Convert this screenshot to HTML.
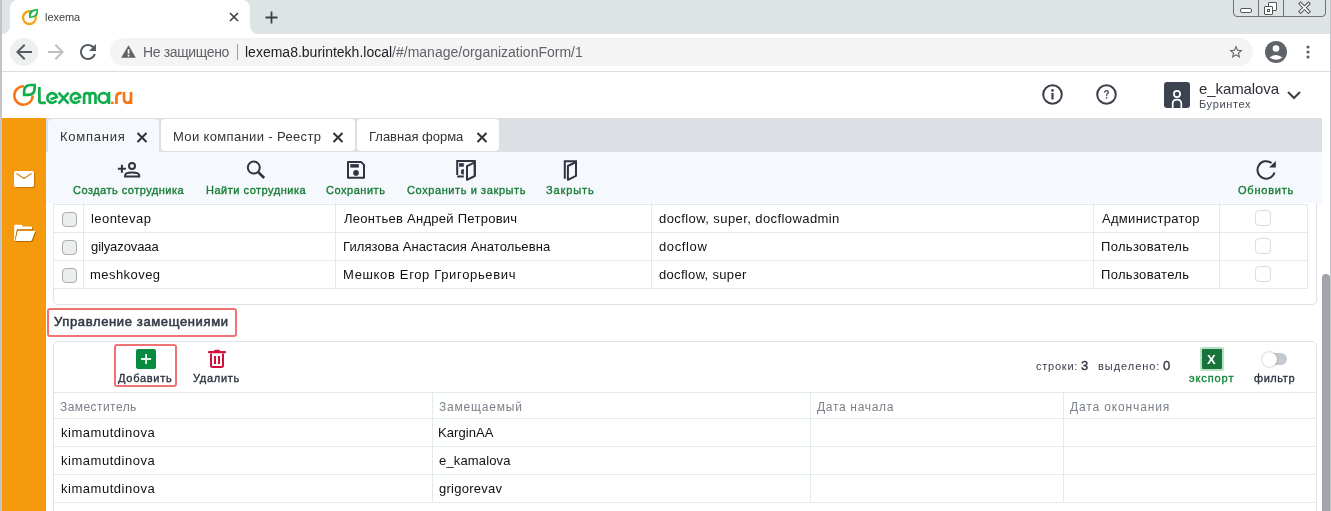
<!DOCTYPE html>
<html><head><meta charset="utf-8">
<style>
*{margin:0;padding:0;box-sizing:border-box}
html,body{width:1331px;height:511px;overflow:hidden;background:#fff;font-family:"Liberation Sans",sans-serif;position:relative}
.a{position:absolute}
.t{position:absolute;white-space:nowrap;line-height:1;will-change:transform}
svg{position:absolute;overflow:visible}
.tb{color:#187c36;font-size:11px;-webkit-text-stroke:0.35px currentColor}
.sb{-webkit-text-stroke:0.35px currentColor}
.sb2{-webkit-text-stroke:0.55px currentColor}
.cell{font-size:13px;color:#111}
.hd{font-size:12px;color:#7a8089}
</style></head><body>
<!-- ============ CHROME ============ -->
<div class="a" style="left:0;top:0;width:1331px;height:34px;background:#dee3e6"></div>
<div class="a" style="left:2px;top:26px;width:256px;height:8px;background:#fff"></div>
<div class="a" style="left:2px;top:0;width:8px;height:34px;background:#dee3e6;border-bottom-right-radius:8px"></div>
<div class="a" style="left:250px;top:0;width:8px;height:34px;background:#dee3e6;border-bottom-left-radius:8px"></div>
<div class="a" style="left:10px;top:0;width:240px;height:34px;background:#fff;border-radius:8px 8px 0 0"></div>
<!-- favicon -->
<svg style="left:20px;top:8px" width="20" height="20" viewBox="0 0 20 20">
 <circle cx="9.4" cy="9.6" r="6.4" fill="none" stroke="#f7a21b" stroke-width="2.3"/>
 <path d="M9 10 L9 5 Q10 1 18 1 L18 5 Q17 10 9 10 Z" fill="#16b94a"/>
 <path d="M10.6 8.6 Q11 3.6 16.6 2.6 Q16.2 8 10.6 8.6Z" fill="#fff"/>
</svg>
<div class="t" style="left:44.50px;top:12px;font-size:11px;color:#3c4043;letter-spacing:-0.060px">lexema</div>
<svg style="left:229px;top:12px" width="10" height="10" viewBox="0 0 10 10"><path d="M1 1L9 9M9 1L1 9" stroke="#3c4043" stroke-width="1.6"/></svg>
<svg style="left:265px;top:11px" width="13" height="13" viewBox="0 0 13 13"><path d="M6.5 0.5V12.5M0.5 6.5H12.5" stroke="#3c4043" stroke-width="1.8"/></svg>
<!-- window controls -->
<div class="a" style="left:1233px;top:-3px;width:93px;height:20px;border:1px solid #707070;border-radius:0 0 4px 4px"></div>
<div class="a" style="left:1258px;top:0;width:1px;height:16px;background:#707070"></div>
<div class="a" style="left:1283px;top:0;width:1px;height:16px;background:#707070"></div>
<div class="a" style="left:1240px;top:8px;width:12px;height:5px;background:#fff;border:1px solid #555;border-radius:2px"></div>
<div class="a" style="left:1268px;top:2px;width:9px;height:9px;background:#fff;border:1px solid #555;border-radius:1px"></div>
<div class="a" style="left:1264px;top:6px;width:9px;height:9px;background:#fff;border:1px solid #555;border-radius:1px"></div>
<div class="a" style="left:1267px;top:9px;width:3px;height:3px;border:1px solid #555"></div>
<svg style="left:1298px;top:1px" width="13" height="12" viewBox="0 0 13 12"><path d="M2.6 2.8L10.4 10.6M10.4 2.8L2.6 10.6" stroke="#555" stroke-width="3.6" stroke-linecap="square"/><path d="M2.6 2.8L10.4 10.6M10.4 2.8L2.6 10.6" stroke="#fff" stroke-width="1.6" stroke-linecap="square"/></svg>
<!-- toolbar -->
<div class="a" style="left:0;top:34px;width:1331px;height:37px;background:#fff"></div>
<div class="a" style="left:0;top:71px;width:1331px;height:1px;background:#dadce0"></div>
<div class="a" style="left:10px;top:38px;width:28px;height:28px;background:#eef0ef;border-radius:14px"></div>
<svg style="left:16px;top:44px" width="16" height="16" viewBox="4 4 16 16"><path d="M20 11H7.83l5.59-5.59L12 4l-8 8 8 8 1.41-1.41L7.83 13H20v-2z" fill="#545b61"/></svg>
<svg style="left:48px;top:44px" width="16" height="16" viewBox="4 4 16 16"><path d="M12 4l-1.41 1.41L16.17 11H4v2h12.17l-5.58 5.59L12 20l8-8z" fill="#bcc1bd"/></svg>
<svg style="left:80px;top:44px" width="16" height="16" viewBox="4 4 16 16"><path d="M17.65 6.35C16.2 4.9 14.21 4 12 4c-4.42 0-7.99 3.58-7.99 8s3.57 8 7.99 8c3.73 0 6.84-2.55 7.73-6h-2.08c-.82 2.33-3.04 4-5.65 4-3.31 0-6-2.69-6-6s2.69-6 6-6c1.66 0 3.14.69 4.22 1.78L13 11h7V4l-2.35 2.35z" fill="#545b61"/></svg>
<div class="a" style="left:110px;top:38px;width:1143px;height:28px;background:#f4f4f4;border-radius:14px"></div>
<svg style="left:121px;top:45px" width="15" height="13" viewBox="0 0 15 13"><path d="M7.5 0.3L14.8 12.8H0.2Z" fill="#5f6368"/><rect x="6.7" y="4.3" width="1.7" height="4.5" fill="#fff"/><rect x="6.7" y="9.8" width="1.7" height="1.7" fill="#fff"/></svg>
<div class="t" style="left:142.60px;top:45px;font-size:14px;color:#5f6368;letter-spacing:-0.360px">Не защищено</div>
<div class="a" style="left:237px;top:44px;width:1px;height:16px;background:#9aa0a6"></div>
<div class="t" style="left:245.00px;top:45px;font-size:14px;color:#202124">lexema8.burintekh.local<span style="color:#5f6368">/#/manage/organizationForm/1</span></div>
<svg style="left:1228px;top:44px" width="16" height="16" viewBox="0 0 24 24"><path d="M22 9.24l-7.19-.62L12 2 9.19 8.63 2 9.24l5.46 4.73L5.82 21 12 17.27 18.18 21l-1.63-7.03L22 9.24zM12 15.4l-3.76 2.27 1-4.28-3.32-2.88 4.38-.38L12 6.1l1.71 4.04 4.38.38-3.32 2.88 1 4.28L12 15.4z" fill="#5f6368"/></svg>
<svg style="left:1265px;top:41px" width="22" height="22" viewBox="0 0 22 22"><circle cx="11" cy="11" r="11" fill="#5f6368"/><circle cx="11" cy="7.5" r="3.3" fill="#fff"/><path d="M4.5 16.5Q11 11.5 17.5 16.5Q11 21 4.5 16.5Z" fill="#fff"/></svg>
<svg style="left:1305px;top:44px" width="6" height="16" viewBox="0 0 6 16"><circle cx="3" cy="3" r="1.6" fill="#5f6368"/><circle cx="3" cy="8" r="1.6" fill="#5f6368"/><circle cx="3" cy="13" r="1.6" fill="#5f6368"/></svg>

<!-- ============ APP HEADER ============ -->
<div class="a" style="left:0;top:72px;width:1331px;height:46px;background:#fff"></div>
<!-- logo -->
<svg style="left:0;top:72px" width="140" height="46" viewBox="0 72 140 46">
 <g fill="none" stroke-width="2.5">
 <path d="M23.98 86.31 A9.2 9.2 0 1 0 32.7 95.5" stroke="#fa7612"/>
 <path d="M24.1 94.9 V91.5 Q24.1 85 31 85 H34.6 V88.5 Q34.6 94.9 28 94.9 Z" stroke="#10ad4b" stroke-width="2.7"/>
 <g stroke="#10ad4b" stroke-width="2.7">
 <path d="M39.4 87 V101 Q39.4 102.8 41.2 102.8 H45.8"/>
 <path d="M56.3 100.4 A4.8 4.8 0 1 1 56.88 97.17 L50.5 99.2"/>
 <path d="M58.6 92.6 L68.6 103.6 M68.6 92.6 L58.6 103.6"/>
 <path d="M79.7 100.4 A4.8 4.8 0 1 1 80.28 97.17 L73.9 99.2"/>
 <path d="M84.1 104 V96 Q84.1 93.2 86.95 93.2 Q89.8 93.2 89.8 96 V104 M89.8 96 Q89.8 93.2 92.65 93.2 Q95.5 93.2 95.5 96 V104"/>
 <circle cx="103.4" cy="98" r="4.8"/>
 <path d="M109 92 V104"/>
 </g>
 <g stroke="#fa7612" stroke-width="2.7">
 <path d="M116.4 104 V97.5 Q116.4 93.2 120.5 93.2 H121.8"/>
 <path d="M124 92 V99 Q124 102.8 127.5 102.8 Q131 102.8 131 99 V92 M131 99 V104"/>
 </g>
 </g>
 <rect x="111.1" y="101.6" width="2.6" height="2.5" fill="#fa7612"/>
</svg>
<!-- header icons -->
<svg style="left:1042px;top:84px" width="21" height="21" viewBox="0 0 21 21"><circle cx="10.5" cy="10.5" r="9.3" fill="none" stroke="#3a3f4a" stroke-width="2"/><rect x="9.4" y="9" width="2.2" height="6.5" fill="#3a3f4a"/><circle cx="10.5" cy="6.4" r="1.3" fill="#3a3f4a"/></svg>
<svg style="left:1096px;top:84px" width="21" height="21" viewBox="0 0 21 21"><circle cx="10.5" cy="10.5" r="9.3" fill="none" stroke="#3a3f4a" stroke-width="2"/><path d="M8.7 8.6Q8.7 6.7 10.5 6.7Q12.3 6.7 12.3 8.3Q12.3 9.4 11.2 10Q10.5 10.4 10.5 11.8" fill="none" stroke="#3a3f4a" stroke-width="1.3"/><circle cx="10.5" cy="13.9" r="0.8" fill="#3a3f4a"/></svg>
<div class="a" style="left:1164px;top:82px;width:26px;height:26px;background:#3d4250;border-radius:3px"></div>
<svg style="left:1164px;top:82px" width="26" height="26" viewBox="0 0 26 26"><circle cx="13" cy="12" r="3.1" fill="none" stroke="#fff" stroke-width="1.7"/><path d="M8.7 26V21.6Q8.7 17.6 13 17.6Q17.3 17.6 17.3 21.6V26" fill="none" stroke="#fff" stroke-width="1.7"/></svg>
<div class="t" style="left:1199.00px;top:81px;font-size:15px;color:#2b2f38;letter-spacing:-0.089px">e_kamalova</div>
<div class="t" style="left:1199.00px;top:99px;font-size:11px;color:#444a55;letter-spacing:0.643px">Буринтех</div>
<svg style="left:1287px;top:91px" width="14" height="8" viewBox="0 0 14 8"><path d="M1 1L7 7L13 1" fill="none" stroke="#3a3f4a" stroke-width="2"/></svg>

<!-- ============ SIDEBAR ============ -->
<div class="a" style="left:0;top:118px;width:46px;height:393px;background:#f59a0c"></div>
<div class="a" style="left:14px;top:171px;width:20px;height:16px;background:#fff;border-radius:2px;box-shadow:1px 1px 1px rgba(120,60,0,.4)"></div>
<svg style="left:14px;top:171px" width="20" height="16" viewBox="0 0 20 16"><path d="M2.5 2.5L10 7.5L17.5 2.5" fill="none" stroke="#d98a10" stroke-width="1.3"/></svg>
<svg style="left:0;top:210px;filter:drop-shadow(1px 1px 0.6px rgba(110,55,0,.5))" width="46" height="40" viewBox="0 210 46 40"><path d="M14.2 226 Q14.2 224.8 15.4 224.8 H21.6 L23.2 226.6 H30.8 Q32 226.6 32 227.8 V229.3 H16.9 L15.2 237.8 V240.9 H15.4 Q14.2 240.9 14.2 239.7 Z" fill="#fff"/><path d="M17.7 230.9 H35.3 L31.9 239.9 Q31.5 240.9 30.5 240.9 H15.4 Z" fill="#fff"/></svg>

<!-- ============ APP TABS ============ -->
<div class="a" style="left:46px;top:118px;width:1276px;height:34px;background:#dcdfe4"></div>
<div class="a" style="left:48px;top:119px;width:111px;height:33px;background:#f5f8fc;border-radius:4px 4px 0 0"></div>
<div class="a" style="left:161px;top:119px;width:194px;height:32px;background:#fff;border-radius:4px"></div>
<div class="a" style="left:357px;top:119px;width:142px;height:32px;background:#fff;border-radius:4px"></div>
<div class="t" style="left:60.40px;top:130px;font-size:13px;color:#333;letter-spacing:0.743px">Компания</div>
<div class="t" style="left:173.30px;top:130px;font-size:13px;color:#333;letter-spacing:0.355px">Мои компании - Реестр</div>
<div class="t" style="left:369.40px;top:130px;font-size:13px;color:#333;letter-spacing:-0.008px">Главная форма</div>
<svg style="left:136px;top:131.5px" width="12" height="11" viewBox="0 0 12 11"><path d="M1.5 1L10.5 10M10.5 1L1.5 10" stroke="#30343c" stroke-width="2.1"/></svg>
<svg style="left:332px;top:131.5px" width="12" height="11" viewBox="0 0 12 11"><path d="M1.5 1L10.5 10M10.5 1L1.5 10" stroke="#30343c" stroke-width="2.1"/></svg>
<svg style="left:476px;top:131.5px" width="12" height="11" viewBox="0 0 12 11"><path d="M1.5 1L10.5 10M10.5 1L1.5 10" stroke="#30343c" stroke-width="2.1"/></svg>

<!-- ============ APP TOOLBAR ============ -->
<div class="a" style="left:46px;top:152px;width:1276px;height:51px;background:#f5f8fc"></div>
<div class="t tb" style="left:72.70px;top:185px;letter-spacing:0.488px">Создать сотрудника</div>
<div class="t tb" style="left:205.50px;top:185px;letter-spacing:0.513px">Найти сотрудника</div>
<div class="t tb" style="left:326.30px;top:185px;letter-spacing:0.525px">Сохранить</div>
<div class="t tb" style="left:406.50px;top:185px;letter-spacing:0.600px">Сохранить и закрыть</div>
<div class="t tb" style="left:545.90px;top:185px;letter-spacing:0.883px">Закрыть</div>
<div class="t tb" style="left:1237.50px;top:185px;letter-spacing:0.786px">Обновить</div>

<svg style="left:0;top:0" width="1331" height="511" viewBox="0 0 1331 511">
 <g fill="none" stroke="#2f3440" stroke-width="2">
  <path d="M117.9 168.8H125.9M121.9 164.8V172.8"/>
  <circle cx="132" cy="165.9" r="3"/>
  <path d="M125.1 176.6V175.5Q125.1 172.6 132.15 172.6Q139.2 172.6 139.2 175.5V176.6Z"/>
  <circle cx="253.8" cy="167.6" r="6"/>
  <path d="M258.3 172.1L264.2 178" stroke-width="2.6"/>
  <path d="M348 161.9H361L364 164.9V177.8H348Z" stroke-linejoin="round"/>
  <path d="M457.2 175V161H474.8V175.5M457.2 176.6H463.8"/>
  <path d="M467 166.2L474.8 162.3V176L467 179.8Z" stroke-linejoin="round"/>
  <path d="M564.8 178.8V161.3H576V175.5"/>
  <path d="M567.9 166L576 162V175.8L567.9 179.8Z" stroke-linejoin="round"/>
  <path d="M1274.5 172.5A8.7 8.7 0 1 1 1271.5 163"/>
 </g>
 <g fill="#2f3440">
  <rect x="350.3" y="164.1" width="8.5" height="3.5"/>
  <circle cx="356" cy="172.9" r="2.8"/>
  <rect x="459.1" y="163.2" width="4.7" height="3.5"/>
  <path d="M463.8 169.1V174.7A2.9 2.8 0 0 1 463.8 169.1Z"/>
  <path d="M1269 167.6L1275.8 160.9V167.6Z"/>
 </g>
</svg>
<!-- ============ CONTENT ============ -->
<div class="a" style="left:46px;top:203px;width:1276px;height:308px;background:#fff"></div>

<!-- card 1 -->
<div class="a" style="left:53px;top:203px;width:1264px;height:102px;border:1px solid #dfe3e8;border-top:none;border-radius:0 0 5px 5px"></div>
<div class="a" style="left:53px;top:204px;width:1255px;height:85px;border:1px solid #e3ebea;border-top:1px solid #e3ebea"></div>
<div class="a" style="left:53px;top:232px;width:1255px;height:1px;background:#e3ebea"></div>
<div class="a" style="left:53px;top:260px;width:1255px;height:1px;background:#e3ebea"></div>
<div class="a" style="left:83px;top:203px;width:1px;height:86px;background:#e3ebea"></div>
<div class="a" style="left:335px;top:203px;width:1px;height:86px;background:#e3ebea"></div>
<div class="a" style="left:651px;top:203px;width:1px;height:86px;background:#e3ebea"></div>
<div class="a" style="left:1093px;top:203px;width:1px;height:86px;background:#e3ebea"></div>
<div class="a" style="left:1219px;top:203px;width:1px;height:86px;background:#e3ebea"></div>
<div class="a" style="left:62px;top:212px;width:15px;height:15px;border:1px solid #a9adaa;background:#eceeec;border-radius:4px"></div>
<div class="a" style="left:1255px;top:210px;width:16px;height:16px;border:1px solid #d6dde3;background:#fff;border-radius:4px"></div>
<div class="t cell" style="left:90.70px;top:212px;letter-spacing:0.437px">leontevap</div>
<div class="t cell" style="left:343.60px;top:212px;letter-spacing:0.270px">Леонтьев Андрей Петрович</div>
<div class="t cell" style="left:659.20px;top:212px;letter-spacing:0.415px">docflow, super, docflowadmin</div>
<div class="t cell" style="left:1101.50px;top:212px;letter-spacing:0.308px">Администратор</div>
<div class="a" style="left:62px;top:240px;width:15px;height:15px;border:1px solid #a9adaa;background:#eceeec;border-radius:4px"></div>
<div class="a" style="left:1255px;top:238px;width:16px;height:16px;border:1px solid #d6dde3;background:#fff;border-radius:4px"></div>
<div class="t cell" style="left:91.30px;top:240px;letter-spacing:-0.100px">gilyazovaaa</div>
<div class="t cell" style="left:342.60px;top:240px;letter-spacing:0.097px">Гилязова Анастасия Анатольевна</div>
<div class="t cell" style="left:659.20px;top:240px;letter-spacing:0.617px">docflow</div>
<div class="t cell" style="left:1100.50px;top:240px;letter-spacing:0.327px">Пользователь</div>
<div class="a" style="left:62px;top:268px;width:15px;height:15px;border:1px solid #a9adaa;background:#eceeec;border-radius:4px"></div>
<div class="a" style="left:1255px;top:266px;width:16px;height:16px;border:1px solid #d6dde3;background:#fff;border-radius:4px"></div>
<div class="t cell" style="left:90.30px;top:268px;letter-spacing:0.450px">meshkoveg</div>
<div class="t cell" style="left:342.60px;top:268px;letter-spacing:0.655px">Мешков Егор Григорьевич</div>
<div class="t cell" style="left:659.20px;top:268px;letter-spacing:0.323px">docflow, super</div>
<div class="t cell" style="left:1100.50px;top:268px;letter-spacing:0.327px">Пользователь</div>
<div class="a" style="left:47px;top:308px;width:190px;height:29px;border:2px solid #f07373;border-radius:3px"></div>
<div class="t sb2" style="left:53.70px;top:315px;font-size:13px;color:#353b48;letter-spacing:0.633px">Управление замещениями</div>
<div class="a" style="left:53px;top:341px;width:1264px;height:200px;border:1px solid #dfe3e8;border-radius:5px"></div>
<div class="a" style="left:114px;top:344px;width:63px;height:43px;border:2px solid #f07373;border-radius:3px"></div>
<div class="a" style="left:136px;top:349px;width:20px;height:20px;background:#078b3e;border-radius:2px"></div>
<svg style="left:136px;top:349px" width="20" height="20" viewBox="0 0 20 20"><path d="M10.1 5V15M5 10H15.1" stroke="#eaf6ee" stroke-width="1.8"/></svg>
<div class="t sb" style="left:117.90px;top:373px;font-size:11px;color:#2f3440;letter-spacing:0.729px">Добавить</div>
<svg style="left:208px;top:349px" width="18" height="19" viewBox="0 0 18 19"><path d="M1 3.2H17" fill="none" stroke="#d2103c" stroke-width="2.2" stroke-linecap="round"/><path d="M6 2.3L6.6 0.7H11.4L12 2.3Z" fill="#d2103c"/><path d="M3 4.5V16.5Q3 18 4.5 18H13.5Q15 18 15 16.5V4.5" fill="none" stroke="#d2103c" stroke-width="2"/><path d="M7 7V15M11 7V15" stroke="#d2103c" stroke-width="2"/></svg>
<div class="t sb" style="left:192.70px;top:373px;font-size:11px;color:#2f3440;letter-spacing:0.717px">Удалить</div>
<div class="t" style="left:1035.60px;top:361px;font-size:11px;color:#353b48;letter-spacing:0.767px">строки:</div>
<div class="t sb" style="left:1080.70px;top:359px;font-size:13px;color:#2f3440">3</div>
<div class="t" style="left:1097.80px;top:361px;font-size:11px;color:#353b48;letter-spacing:0.963px">выделено:</div>
<div class="t sb" style="left:1163.00px;top:359px;font-size:13px;color:#2f3440">0</div>
<div class="a" style="left:1200px;top:347px;width:24px;height:24px;background:#b9dfc4;border-radius:2px"></div>
<div class="a" style="left:1202px;top:349px;width:20px;height:20px;background:#17743a;border-radius:1px"></div>
<div class="t" style="left:1207px;top:353px;font-size:13px;font-weight:bold;color:#fff">X</div>
<div class="t sb" style="left:1189.40px;top:373px;font-size:11px;color:#15893c;letter-spacing:0.900px">экспорт</div>
<div class="a" style="left:1265px;top:353px;width:22px;height:12px;background:#c5cad1;border-radius:6px"></div>
<div class="a" style="left:1262px;top:351.5px;width:15px;height:15px;background:#fff;border-radius:8px;box-shadow:0 0 2px rgba(0,0,0,.4)"></div>
<div class="t sb" style="left:1254.30px;top:373px;font-size:11px;color:#2f3440;letter-spacing:0.580px">фильтр</div>
<div class="a" style="left:54px;top:392px;width:1262px;height:1px;background:#e3ebea"></div>
<div class="a" style="left:54px;top:418px;width:1262px;height:1px;background:#e3ebea"></div>
<div class="a" style="left:54px;top:446px;width:1262px;height:1px;background:#e3ebea"></div>
<div class="a" style="left:54px;top:474px;width:1262px;height:1px;background:#e3ebea"></div>
<div class="a" style="left:54px;top:502px;width:1262px;height:1px;background:#e3ebea"></div>
<div class="a" style="left:432px;top:392px;width:1px;height:110px;background:#e3ebea"></div>
<div class="a" style="left:810px;top:392px;width:1px;height:110px;background:#e3ebea"></div>
<div class="a" style="left:1063px;top:392px;width:1px;height:110px;background:#e3ebea"></div>
<div class="t hd" style="left:59.80px;top:401px;letter-spacing:0.440px">Заместитель</div>
<div class="t hd" style="left:438.70px;top:401px;letter-spacing:0.811px">Замещаемый</div>
<div class="t hd" style="left:817.00px;top:401px;letter-spacing:0.690px">Дата начала</div>
<div class="t hd" style="left:1070.20px;top:401px;letter-spacing:0.862px">Дата окончания</div>
<div class="t cell" style="left:60.80px;top:426px;letter-spacing:0.533px">kimamutdinova</div>
<div class="t cell" style="left:438.40px;top:426px;letter-spacing:0.071px">KarginAA</div>
<div class="t cell" style="left:60.80px;top:454px;letter-spacing:0.533px">kimamutdinova</div>
<div class="t cell" style="left:439.40px;top:454px;letter-spacing:0.156px">e_kamalova</div>
<div class="t cell" style="left:60.80px;top:482px;letter-spacing:0.533px">kimamutdinova</div>
<div class="t cell" style="left:439.40px;top:482px;letter-spacing:0.244px">grigorevav</div>
<!-- scrollbar -->
<div class="a" style="left:1322px;top:274px;width:8px;height:240px;background:#a3a3ab;border-radius:4px 4px 0 0"></div>
<!-- window borders -->
<div class="a" style="left:0;top:0;width:2px;height:511px;background:#c2c4c7"></div>
<div class="a" style="left:1330px;top:0;width:1px;height:511px;background:#c2c4c7"></div>
</body></html>
